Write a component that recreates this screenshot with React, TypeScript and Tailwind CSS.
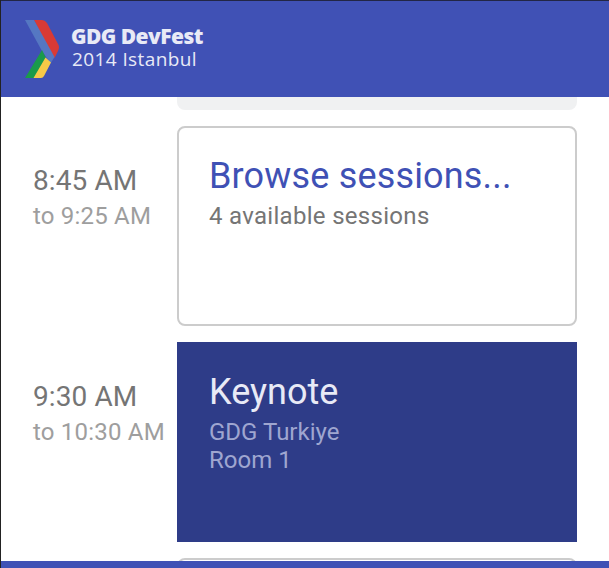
export default function App() {
  return (
    <div className="flex h-[568px] w-[609px] flex-col overflow-hidden border-l border-[#222] bg-white font-['Roboto',sans-serif]">
      <header className="flex h-[97px] shrink-0 border-t border-[#222645] bg-[#4051b5] pl-6 pt-[19px]">
        <svg className="shrink-0" width="36" height="59" viewBox="0 0 36 59">
          <path d="M9 0H17Q20 0 22 3L33 24Q35 27 33 31L29.500 38L20 22Z" fill="#d83a35" />
          <path d="M0 0H9L29.500 37L25.500 43.500L17 31Z" fill="#5577c2" />
          <path d="M17 30L21 38L9 58H0Z" fill="#1a9a4a" />
          <path d="M20.500 37.500L26 42.500L19 56Q18 58 16 58H8.500Z" fill="#f7c948" />
        </svg>
        <div className="ml-[10px] mt-[4px] whitespace-nowrap font-['Open_Sans',sans-serif] text-[#e8eaf6]">
          <div className="text-[21px] font-extrabold leading-[24px] tracking-[-0.55px]">GDG DevFest</div>
          <div className="ml-px text-[19px] font-medium leading-[22px] tracking-[0.4px]">2014 Istanbul</div>
        </div>
      </header>
      <main className="flex h-[464px] shrink-0 flex-col overflow-hidden">
        <div className="ml-44 h-[13px] w-[400px] shrink-0 rounded-b-lg bg-[#f0f1f2]" />
        <section className="mt-4 flex h-[200px] shrink-0">
          <div className="w-44 whitespace-nowrap pl-8 pt-[38px] text-[#757575]">
            <div className="text-[28px] leading-[34px] tracking-[0.1px]">8:45 AM</div>
            <div className="mt-[3px] text-[24px] leading-[30px] tracking-[0.2px] text-[#9e9e9e]">to 9:25 AM</div>
          </div>
          <div className="w-[400px] rounded-lg border-2 border-[#ccc] pl-[30px] pt-[26px]">
            <div className="text-[36px] leading-[44px] tracking-[0.17px] text-[#3f51b5]">Browse sessions...</div>
            <div className="mt-[4px] text-[24px] leading-[28px] tracking-[0.3px] text-[#757575]">4 available sessions</div>
          </div>
        </section>
        <section className="mt-4 flex h-[200px] shrink-0">
          <div className="w-44 whitespace-nowrap pl-8 pt-[38px] text-[#757575]">
            <div className="text-[28px] leading-[34px] tracking-[0.1px]">9:30 AM</div>
            <div className="mt-[3px] text-[24px] leading-[30px] tracking-[0.2px] text-[#9e9e9e]">to 10:30 AM</div>
          </div>
          <div className="w-[400px] bg-[#2e3c88] pl-8 pt-[28px] text-[#9fa6d0]">
            <div className="text-[36px] leading-[44px] text-[#e8eaf6]">Keynote</div>
            <div className="mt-[4px] text-[24px] leading-[28px]">GDG Turkiye</div>
            <div className="text-[24px] leading-[28px]">Room 1</div>
          </div>
        </section>
        <div className="ml-44 mt-4 h-20 w-[400px] shrink-0 rounded-lg border-2 border-[#ccc]" />
      </main>
      <footer className="h-[7px] shrink-0 bg-[#3f51b5]" />
    </div>
  );
}
